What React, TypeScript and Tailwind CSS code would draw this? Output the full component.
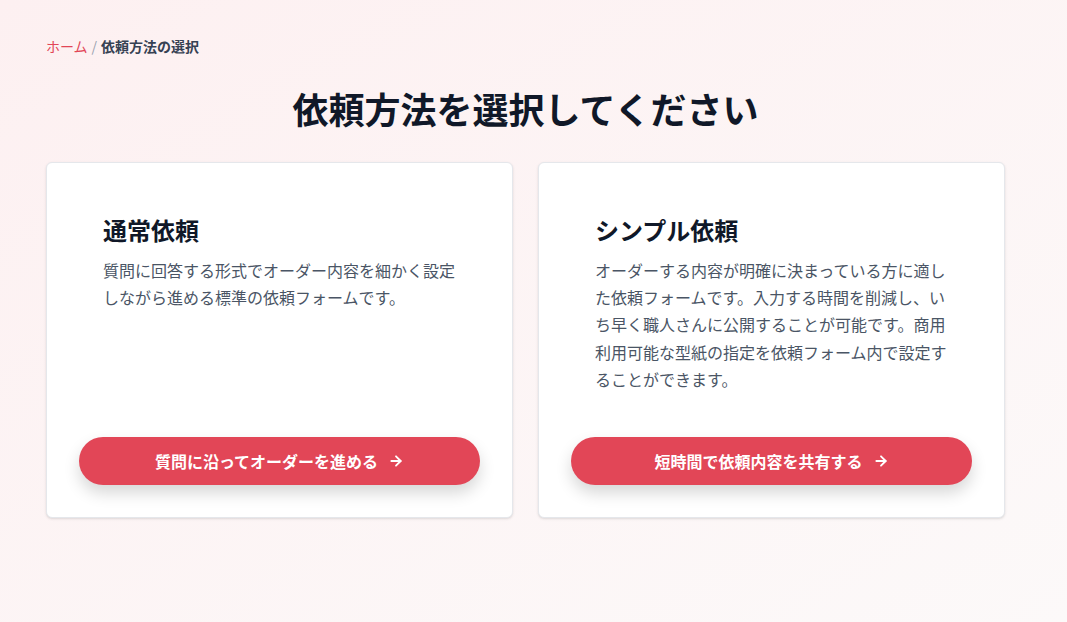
import { ArrowRight } from "lucide-react";

const font = { fontFamily: '"Noto Sans CJK JP", "Noto Sans", sans-serif' };

type Option = {
    title: string;
    body: string;
    cta: string;
};

const options: Option[] = [
    {
        title: "通常依頼",
        body: "質問に回答する形式でオーダー内容を細かく設定しながら進める標準の依頼フォームです。",
        cta: "質問に沿ってオーダーを進める",
    },
    {
        title: "シンプル依頼",
        body: "オーダーする内容が明確に決まっている方に適した依頼フォームです。入力する時間を削減し、いち早く職人さんに公開することが可能です。商用利用可能な型紙の指定を依頼フォーム内で設定することができます。",
        cta: "短時間で依頼内容を共有する",
    },
];

const OptionCard = ({ option }: { option: Option }) => {
    return (
        <div className="flex flex-col bg-white border border-gray-200 rounded-md shadow-sm p-8">
            <div className="flex-1 px-6">
                <h2 className="mt-5 text-2xl leading-[30px] font-bold text-gray-900">{option.title}</h2>
                <p className="mt-3 text-base leading-[1.7] text-gray-600">{option.body}</p>
            </div>
            <button className="mt-[44px] h-12 w-full rounded-full bg-[#e24657] text-white font-bold text-base flex items-center justify-center gap-2.5 shadow-[0_8px_16px_rgba(0,0,0,0.16)]">
                {option.cta}
                <ArrowRight size={16} strokeWidth={2.75} />
            </button>
        </div>
    );
};

const App = () => {
    return (
        <div className="min-h-screen bg-gradient-to-br from-[#fdf0f1] to-[#fcf9f9]" style={font}>
            <div className="w-[959px] ml-[46px] pt-9 pb-16">
                <nav className="text-sm leading-5 flex items-center gap-1">
                    <span className="text-[#e24657]">ホーム</span>
                    <span className="text-gray-400">/</span>
                    <span className="font-bold text-gray-700">依頼方法の選択</span>
                </nav>
                <h1 className="mt-[32px] text-center text-4xl leading-10 font-bold text-gray-900">
                    依頼方法を選択してください
                </h1>
                <div className="mt-[34px] grid grid-cols-2 gap-[25px]">
                    {options.map((o) => (
                        <OptionCard key={o.title} option={o} />
                    ))}
                </div>
            </div>
        </div>
    );
};

export default App;
